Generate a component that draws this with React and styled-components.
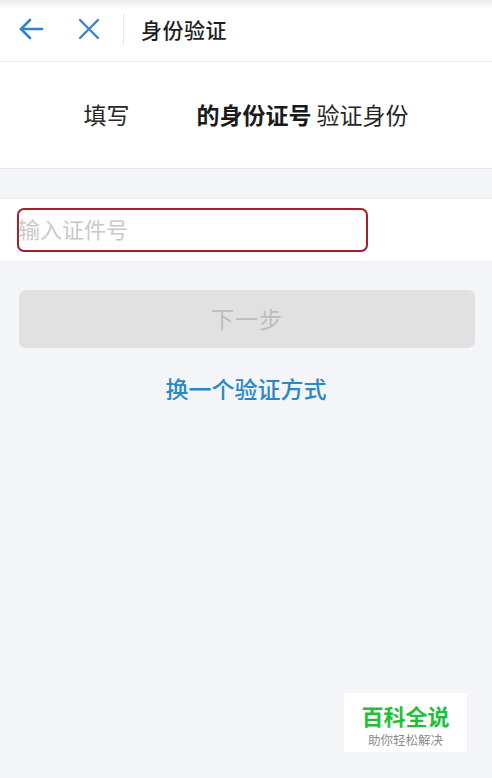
import React from "react";
import styled, { createGlobalStyle } from "styled-components";

const Global = createGlobalStyle`
  html, body { margin: 0; padding: 0; }
  body {
    font-family: "Noto Sans CJK SC", "Noto Sans", sans-serif;
    background: #f4f5f9;
  }
`;

const Page = styled.div`
  position: relative;
  width: 492px;
  min-height: 778px;
  background: #f4f5f9;
  overflow: hidden;
`;

const Header = styled.header`
  height: 62px;
  box-sizing: border-box;
  display: flex;
  align-items: center;
  background: linear-gradient(#e9e9e9 0px, #ffffff 9px, #ffffff 100%);
  border-bottom: 1px solid #ececec;
  padding: 0 0 3px 18px;
`;

const IconButton = styled.button`
  border: 0;
  background: none;
  padding: 0;
  width: ${(p) => p.$w}px;
  height: 32px;
  display: flex;
  align-items: center;
  color: ${(p) => p.$color};
`;

const Divider = styled.div`
  width: 1px;
  height: 32px;
  background: #e6e6e6;
  margin: 0 17px 0 3px;
`;

const Title = styled.h1`
  margin: 0;
  font-size: 21px;
  font-weight: 500;
  color: #1e1e1e;
  letter-spacing: 0.5px;
  line-height: 28px;
`;

const Prompt = styled.section`
  height: 107px;
  box-sizing: border-box;
  background: #fff;
  border-bottom: 1px solid #e8e8ea;
  display: flex;
  align-items: center;
  justify-content: center;
  font-size: 23px;
  color: #262626;
  padding: 0 0 2px 0;
`;

const Masked = styled.span`
  display: inline-block;
  width: 67px;
`;

const Strong = styled.b`
  font-weight: 700;
  color: #1a1a1a;
`;

const InputRow = styled.div`
  margin-top: 29px;
  height: 62px;
  background: #fff;
  border-top: 1px solid #ebecef;
  border-bottom: 1px solid #ebecef;
  display: flex;
  align-items: center;
  padding-left: 17px;
`;

const InputBox = styled.div`
  width: 351px;
  height: 44px;
  box-sizing: border-box;
  border: 2px solid #a31f2b;
  border-radius: 7px;
  display: flex;
  align-items: center;
  padding-bottom: 4px;
`;

const Input = styled.input`
  border: 0;
  outline: none;
  background: transparent;
  width: 100%;
  padding: 0;
  margin-left: -1px;
  font-family: inherit;
  font-size: 22px;
  line-height: 30px;
  color: #333;
  &::placeholder { color: #c9c9c9; }
`;

const NextButton = styled.button`
  display: block;
  margin: 28px 17px 0 19px;
  width: 456px;
  height: 58px;
  border: 0;
  border-radius: 7px;
  background: #e1e1e1;
  color: #bdbdbd;
  font-family: inherit;
  font-size: 23px;
  letter-spacing: 1px;
  padding: 0 0 3px;
`;

const SwitchLink = styled.a`
  display: block;
  margin-top: 24px;
  text-align: center;
  font-size: 23px;
  font-weight: 500;
  color: #2b88c6;
  text-decoration: none;
  line-height: 32px;
`;

const Watermark = styled.div`
  position: absolute;
  left: 344px;
  top: 693px;
  width: 123px;
  height: 59px;
  box-sizing: border-box;
  padding-top: 10px;
  background: #fff;
  display: flex;
  flex-direction: column;
  align-items: center;
`;

const MarkTitle = styled.div`
  font-size: 22px;
  font-weight: 700;
  color: #1fbf3b;
  line-height: 24px;
`;

const MarkSub = styled.div`
  margin-top: 5px;
  font-size: 12.5px;
  color: #8c8c8c;
  line-height: 16px;
`;

export default function App() {
  return (
    <Page>
      <Global />
      <Header>
        <IconButton $w={60} $color="#2a86d2" aria-label="返回">
          <svg width="26" height="24" viewBox="0 0 26 24" fill="none" stroke="currentColor" strokeWidth="2.6" strokeLinecap="round" strokeLinejoin="round">
            <path d="M24 12H3" />
            <path d="M12 3L3 12l9 9" />
          </svg>
        </IconButton>
        <IconButton $w={42} $color="#3c82d4" aria-label="关闭">
          <svg width="22" height="22" viewBox="0 0 22 22" fill="none" stroke="currentColor" strokeWidth="2.4" strokeLinecap="round">
            <path d="M2 2l18 18M20 2L2 20" />
          </svg>
        </IconButton>
        <Divider />
        <Title>身份验证</Title>
      </Header>
      <Prompt>
        填写<Masked />
        <Strong>的身份证号</Strong>&nbsp;验证身份
      </Prompt>
      <InputRow>
        <InputBox>
          <Input placeholder="输入证件号" />
        </InputBox>
      </InputRow>
      <NextButton>下一步</NextButton>
      <SwitchLink href="#">换一个验证方式</SwitchLink>
      <Watermark>
        <MarkTitle>百科全说</MarkTitle>
        <MarkSub>助你轻松解决</MarkSub>
      </Watermark>
    </Page>
  );
}
